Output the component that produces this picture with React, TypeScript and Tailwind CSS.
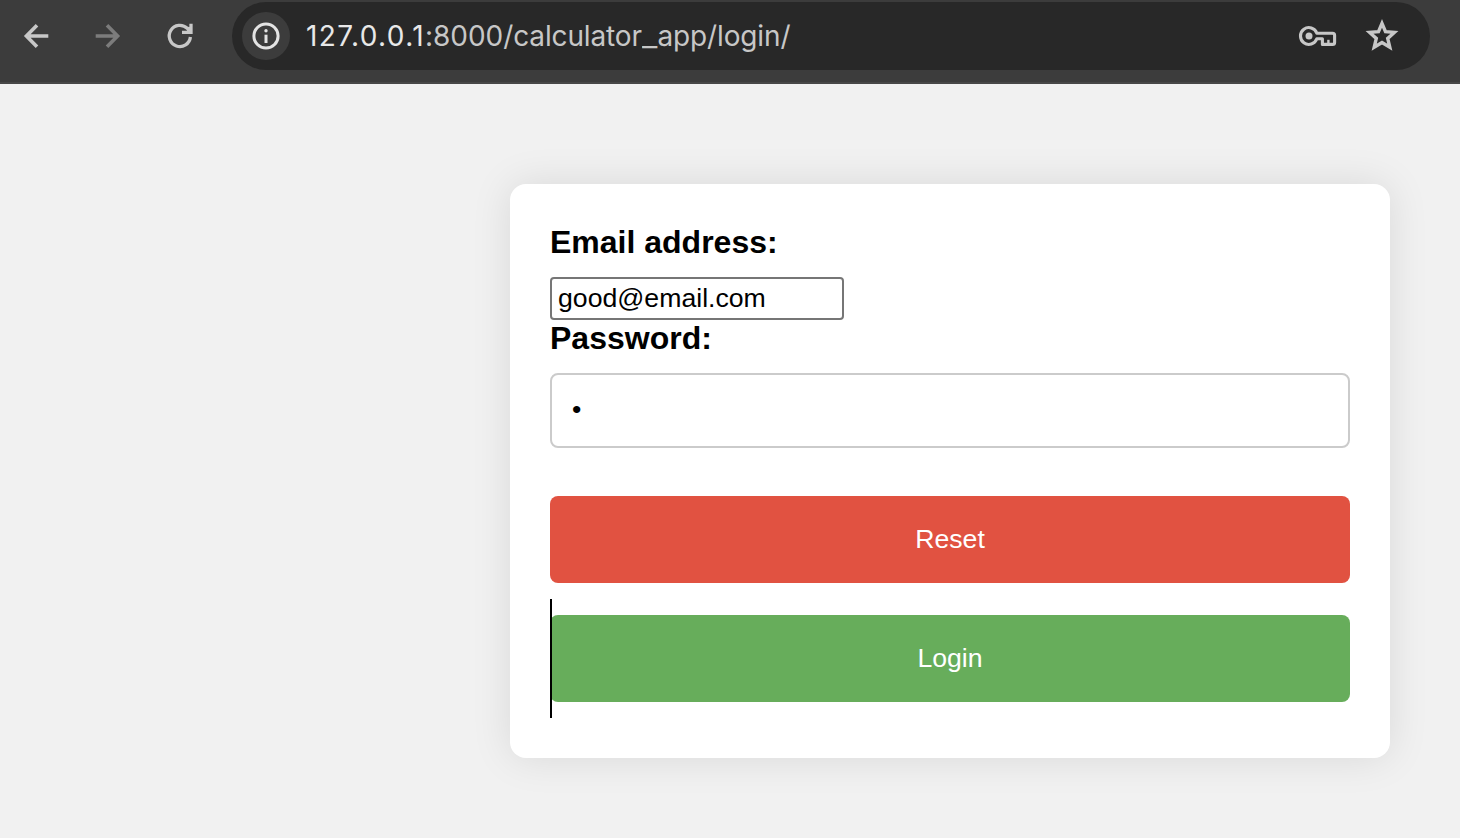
function Toolbar() {
  return (
    <header className="flex h-[84px] items-start border-b-2 border-[#474747] bg-[#3c3c3c] pt-[2px]">
      <div className="flex h-[68px] w-[232px] shrink-0 items-center">
        <svg className="ml-[18px] size-9" viewBox="0 0 36 36" fill="none" stroke="#c7c7c7" strokeWidth="3.6">
          <path d="M30.3 18H8.5M19 7.2L8.4 18 19 28.8" />
        </svg>
        <svg className="ml-[36px] size-9" viewBox="0 0 36 36" fill="none" stroke="#7c7c7c" strokeWidth="3.6">
          <path d="M5.7 18h21.8M17 7.2L27.6 18 17 28.8" />
        </svg>
        <svg className="ml-[36px] size-9" viewBox="0 0 36 36" fill="none" stroke="#c7c7c7" strokeWidth="3.3">
          <path d="M28.4 19A10.6 10.6 0 1 1 25.3 10.4L28.5 13.8M29 5.7V14.4H20" />
          <path d="M24 8.8L29 9V14.5H26Z" fill="#c7c7c7" stroke="none" />
        </svg>
      </div>
      <div className="flex h-[68px] w-[1198px] shrink-0 items-center rounded-full bg-[#282828] pl-[10px]">
        <div className="flex size-12 items-center justify-center rounded-full bg-[#3c3c3c]">
          <svg className="size-[30px]" viewBox="0 0 30 30" fill="none" stroke="#e3e3e3">
            <circle cx="15" cy="15" r="12.1" strokeWidth="3" />
            <path d="M15 13.7v8.3" strokeWidth="3" />
            <circle cx="15" cy="9.8" r="1.7" fill="#e3e3e3" stroke="none" />
          </svg>
        </div>
        <div className="ml-[16px] whitespace-pre font-['Inter',sans-serif] text-[28px] leading-9 tracking-[-0.14px] text-[#c7c7c7]">
          <span className="tracking-[1.4px] text-[#e8e8e8]">127.0.0.1</span>
          <span className="tracking-[-0.05px]">:8000</span>/calculator
          <span className="mr-[3px] inline-block origin-left scale-x-[1.2]">_</span>app/login/
        </div>
        <div className="ml-auto flex items-center gap-[26px] pr-[30px]">
          <svg className="h-6 w-[40px]" viewBox="0 0 40 24" fill="none" stroke="#c7c7c7" strokeWidth="3.1" strokeLinejoin="round">
            <path d="M18.8 9.2A8.4 8.4 0 1 0 18.8 14.8H24.4V20.4H34.6Q36.6 20.4 36.6 18.4V11.2Q36.6 9.2 34.6 9.2Z" />
            <circle cx="11" cy="12" r="3.5" fill="#c7c7c7" stroke="none" />
            <path d="M30.4 15.8V20" strokeWidth="2.4" />
          </svg>
          <svg className="size-9" viewBox="0 0 36 36" fill="none" stroke="#c7c7c7" strokeWidth="3.4">
            <path d="M18 5.4L21.5 13.6 30.4 14.4 23.7 20.4 25.8 29.3 18 24.6 10.2 29.3 12.3 20.4 5.6 14.4 14.5 13.6Z" />
          </svg>
        </div>
      </div>
    </header>
  );
}

function LoginForm() {
  return (
    <form
      className="ml-[510px] mt-[100px] flex h-[574px] w-[880px] flex-col items-stretch rounded-[16px] bg-white p-[40px] shadow-[0_0_40px_rgba(0,0,0,0.1)]"
      onSubmit={(e) => e.preventDefault()}
    >
      <label htmlFor="email" className="h-[37px] text-[32px] font-bold leading-[37px]">
        Email address:
      </label>
      <input
        id="email"
        type="email"
        defaultValue="good@email.com"
        className="mt-[16px] h-[43px] w-[294px] rounded-[4px] border-2 border-[#767676] bg-white px-[6px] text-[26.667px] leading-[31px] outline-none"
      />
      <label htmlFor="password" className="h-[37px] text-[32px] font-bold leading-[37px]">
        Password:
      </label>
      <div className="mt-[16px] flex h-[75px] items-center rounded-[8px] border-2 border-[#cbcbcb] px-[20px] pb-[4px]">
        <input
          id="password"
          type="text"
          defaultValue="•"
          className="h-[34px] w-full bg-transparent text-[26.667px] leading-[34px] outline-none"
        />
      </div>
      <button type="reset" className="mt-[48px] h-[87px] rounded-[8px] bg-[#e15241] pb-[2px] text-[26.667px] text-white">
        Reset
      </button>
      <div className="relative mt-[16px] h-[119px] py-[16px]">
        <button type="submit" className="h-[87px] w-full rounded-[8px] bg-[#67ad5b] pb-[2px] text-[26.667px] text-white">
          Login
        </button>
        <span className="absolute left-0 top-0 h-full w-[2px] bg-black" />
      </div>
    </form>
  );
}

export default function App() {
  return (
    <div className="h-[838px] w-[1460px] overflow-hidden bg-[#f1f1f1] font-['Liberation_Sans',Arial,sans-serif] text-black">
      <Toolbar />
      <LoginForm />
    </div>
  );
}
